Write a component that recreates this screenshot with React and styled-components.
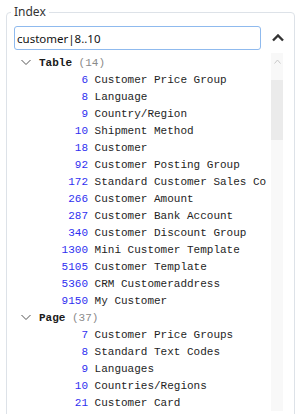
import React from "react";
import styled, { createGlobalStyle } from "styled-components";

const GlobalStyle = createGlobalStyle`
  html, body {
    margin: 0;
    padding: 0;
    background: #fff;
    overflow: hidden;
  }
  body {
    font-family: "Noto Sans", "Open Sans", sans-serif;
  }
`;

const Fieldset = styled.fieldset`
  margin: 4px 6px 0;
  padding: 0 9px 0 7px;
  min-width: 0;
  border: 1px solid #dde2e8;
  border-radius: 4px;
  min-height: 440px;
`;

const Legend = styled.legend`
  padding: 0 3px;
  margin-left: -3px;
  font-size: 12px;
  line-height: 16px;
  color: #333;
`;

const SearchRow = styled.div`
  display: flex;
  align-items: center;
  margin-top: 6px;
`;

const SearchInput = styled.div`
  box-sizing: border-box;
  width: 247px;
  flex: none;
  height: 24px;
  border: 1px solid #8fbaee;
  border-radius: 3px;
  padding: 0 2px;
  display: flex;
  align-items: center;
  font-size: 11.5px;
  color: #111;
`;

const CollapseButton = styled.button`
  flex: 1;
  display: flex;
  justify-content: center;
  align-items: center;
  padding: 0;
  margin-left: 10px;
  border: none;
  background: none;
  height: 24px;
`;

const Body = styled.div`
  display: flex;
  margin-top: 3px;
`;

const List = styled.div`
  flex: 1;
  min-width: 0;
  overflow: hidden;
  padding-top: 1px;
  font-family: "Liberation Mono", "DejaVu Sans Mono", monospace;
  font-size: 11px;
`;

const GroupHeader = styled.div`
  display: flex;
  align-items: center;
  height: 17px;
  white-space: pre;
`;

const Chevron = styled.svg`
  margin-left: 7px;
  margin-right: 8px;
  flex: none;
`;

const GroupName = styled.span`
  font-weight: bold;
  color: #1a1a1a;
`;

const GroupCount = styled.span`
  color: #8a8a8a;
`;

const Row = styled.div`
  display: flex;
  align-items: center;
  height: 17px;
  white-space: pre;
`;

const Id = styled.span`
  width: 74px;
  flex: none;
  text-align: right;
  color: #2f2ff0;
`;

const Name = styled.span`
  margin-left: 6.6px;
  color: #1e1e1e;
`;

const Scrollbar = styled.div`
  width: 12px;
  flex: none;
  margin: 0 2px 0 4px;
  background: #f8f8f8;
  display: flex;
  flex-direction: column;
  align-items: center;
`;

const ScrollArrow = styled.div`
  height: 17px;
  display: flex;
  align-items: center;
  justify-content: center;
`;

const Thumb = styled.div`
  width: 12px;
  height: 60px;
  margin-top: 10px;
  background: #ebebeb;
`;

const groups = [
  {
    name: "Table",
    count: 14,
    items: [
      [6, "Customer Price Group"],
      [8, "Language"],
      [9, "Country/Region"],
      [10, "Shipment Method"],
      [18, "Customer"],
      [92, "Customer Posting Group"],
      [172, "Standard Customer Sales Co"],
      [266, "Customer Amount"],
      [287, "Customer Bank Account"],
      [340, "Customer Discount Group"],
      [1300, "Mini Customer Template"],
      [5105, "Customer Template"],
      [5360, "CRM Customeraddress"],
      [9150, "My Customer"],
    ],
  },
  {
    name: "Page",
    count: 37,
    items: [
      [7, "Customer Price Groups"],
      [8, "Standard Text Codes"],
      [9, "Languages"],
      [10, "Countries/Regions"],
      [21, "Customer Card"],
    ],
  },
];

const ExpandedIcon = () => (
  <Chevron width="10" height="7" viewBox="0 0 10 7">
    <path d="M0.5 1 L5 5.5 L9.5 1" fill="none" stroke="#555" strokeWidth="1" />
  </Chevron>
);

const App = () => (
  <>
    <GlobalStyle />
    <Fieldset>
      <Legend>Index</Legend>
      <SearchRow>
        <SearchInput>customer|8..10</SearchInput>
        <CollapseButton>
          <svg width="12" height="8" viewBox="0 0 12 8">
            <path d="M1 6.5 L6 1.5 L11 6.5" fill="none" stroke="#333" strokeWidth="2.4" />
          </svg>
        </CollapseButton>
      </SearchRow>
      <Body>
        <List>
          {groups.map((g) => (
            <div key={g.name}>
              <GroupHeader>
                <ExpandedIcon />
                <GroupName>{g.name}</GroupName>
                <GroupCount> ({g.count})</GroupCount>
              </GroupHeader>
              {g.items.map(([id, name]) => (
                <Row key={id}>
                  <Id>{id}</Id>
                  <Name>{name}</Name>
                </Row>
              ))}
            </div>
          ))}
        </List>
        <Scrollbar>
          <ScrollArrow>
            <svg width="7" height="5" viewBox="0 0 7 5">
              <path d="M0.5 4.5 L3.5 1 L6.5 4.5" fill="none" stroke="#c9c9c9" strokeWidth="1" />
            </svg>
          </ScrollArrow>
          <Thumb />
        </Scrollbar>
      </Body>
    </Fieldset>
  </>
);

export default App;
